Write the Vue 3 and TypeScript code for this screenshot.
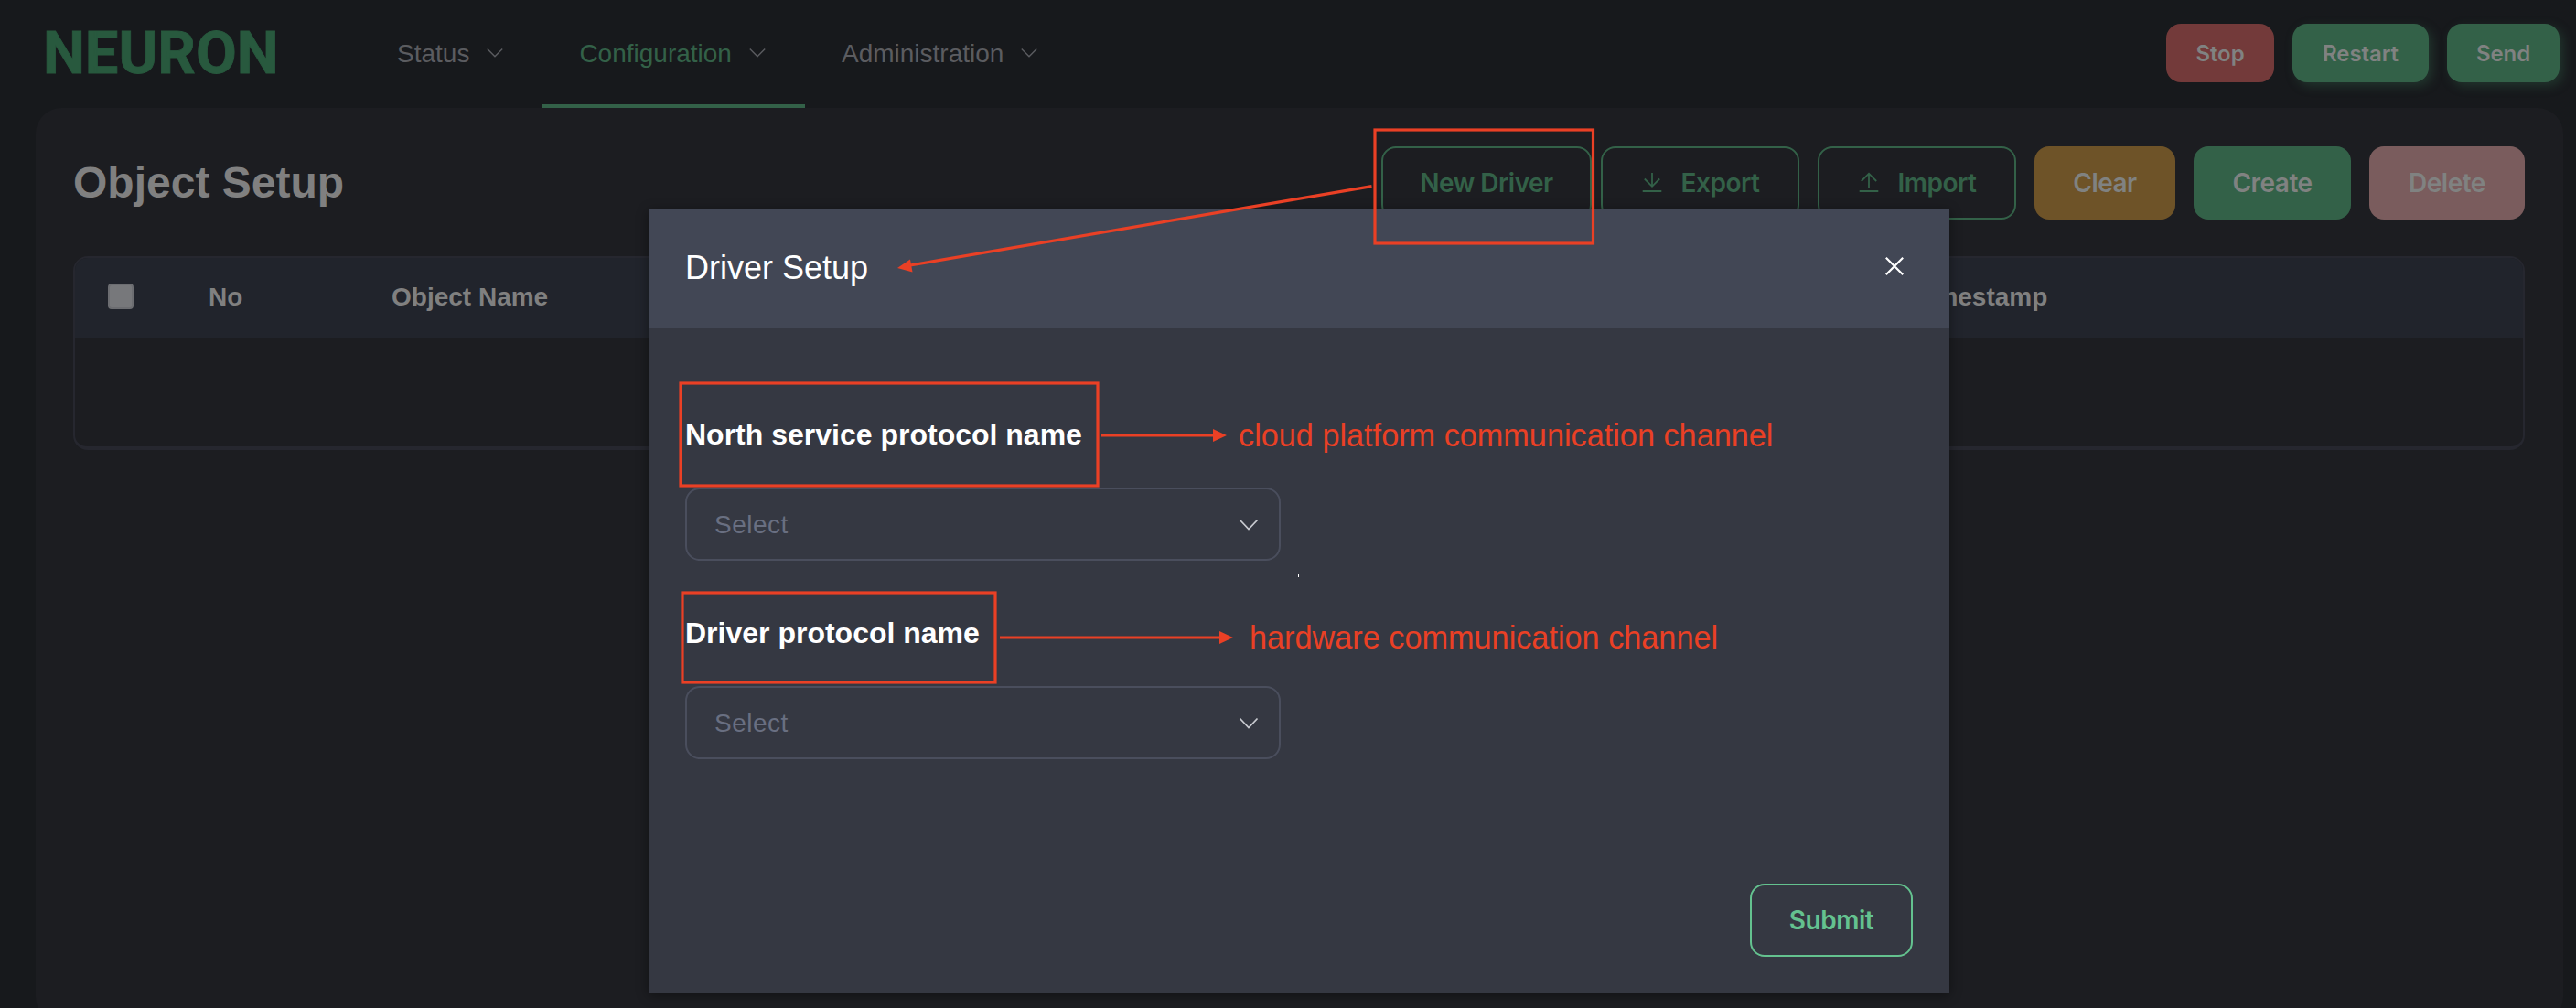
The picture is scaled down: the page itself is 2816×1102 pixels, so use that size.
<script setup lang="ts">
interface NavItem {
  label: string
  active?: boolean
}

const navItems: NavItem[] = [
  { label: 'Status' },
  { label: 'Configuration', active: true },
  { label: 'Administration' },
]

const fields: string[] = ['North service protocol name', 'Driver protocol name']
</script>

<template>
  <div class="page">
    <header class="topbar">
      <div class="logo">NEURON</div>
      <nav class="nav">
        <a v-for="item in navItems" :key="item.label" class="nav-item" :class="{ active: item.active }">
          <span>{{ item.label }}</span>
          <svg class="nav-chevron" viewBox="0 0 24 24"><path d="M3.800 7.500 12 15.800l8.200-8.300" /></svg>
        </a>
      </nav>
      <div class="top-actions">
        <button class="small stop">Stop</button>
        <button class="small restart glow">Restart</button>
        <button class="small send glow">Send</button>
      </div>
    </header>

    <main class="card">
      <div class="card-head">
        <h1>Object Setup</h1>
        <div class="actions">
          <button class="btn outline new-driver">New Driver</button>
          <button class="btn outline port">
            <svg class="btn-icon" viewBox="0 0 24 24"><path d="M12 1v15M3.800 7.500 12 15.800l8.200-8.300M1.700 21h20.600" /></svg>
            Export
          </button>
          <button class="btn outline port">
            <svg class="btn-icon" viewBox="0 0 24 24"><path d="M12 17V2M3.800 10 12 1.700l8.200 8.300M1.700 21h20.600" /></svg>
            Import
          </button>
          <button class="btn clear">Clear</button>
          <button class="btn create">Create</button>
          <button class="btn delete">Delete</button>
        </div>
      </div>
      <div class="table">
        <div class="thead">
          <span class="col-check"><i class="checkbox"></i></span>
          <span class="col-no">No</span>
          <span class="col-name">Object Name</span>
          <span class="col-time">Timestamp</span>
        </div>
      </div>
    </main>

    <section class="modal">
      <div class="modal-head">
        <h2>Driver Setup</h2>
        <svg class="close" viewBox="0 0 20 20"><path d="M.8.8 19.200 19.200M19.200.8.8 19.200" /></svg>
      </div>
      <div class="modal-body">
        <div v-for="field in fields" :key="field" class="field">
          <label>{{ field }}</label>
          <div class="select">
            <span>Select</span>
            <svg class="select-chevron" viewBox="0 0 22 14"><path d="M1.500 1.500 11 11.500l9.500-10" /></svg>
          </div>
        </div>
      </div>
      <div class="modal-foot">
        <button class="btn outline submit">Submit</button>
      </div>
    </section>

    <svg class="notes" viewBox="0 0 2816 1102">
      <g class="lines">
        <rect x="1503" y="142" width="238.500" height="124" />
        <rect x="744" y="419" width="456" height="112" />
        <rect x="746" y="648" width="342" height="98" />
        <path d="M1499.500 203.700 995 290" />
        <path d="M1204 476h124" />
        <path d="M1093 697h242" />
      </g>
      <g class="heads">
        <path d="M981 293 995 283.500 997.500 297.500Z" />
        <path d="M1341 476 1326 469v14Z" />
        <path d="M1348 697 1333 690v14Z" />
      </g>
      <text x="1354" y="488">cloud platform communication channel</text>
      <text x="1366" y="709">hardware communication channel</text>
      <rect class="tick" x="1419" y="628" width="1" height="3" />
    </svg>
  </div>
</template>

<style>
body {
  margin: 0;
  background: #17191c;
}
</style>

<style scoped>
.page {
  position: relative;
  width: 2816px;
  height: 1102px;
  overflow: hidden;
  background: #17191c;
  font-family: 'Liberation Sans', Arial, sans-serif;
  font-size: 28px;
  box-sizing: border-box;
}
.page * {
  box-sizing: border-box;
}
svg {
  fill: none;
  stroke: currentColor;
  flex: none;
}
.topbar {
  display: flex;
  height: 118px;
  padding: 0 18px 0 47px;
}
.logo {
  width: 347px;
  padding-top: 1px;
  font: 700 65px/114px Roboto, sans-serif;
  color: #28593e;
  -webkit-text-stroke: 0.8px #28593e;
}
.nav {
  display: flex;
}
.nav-item {
  display: flex;
  padding: 0 40px;
  line-height: 117px;
  color: #5b5c60;
  border-bottom: 4px solid transparent;
}
.nav-item.active {
  color: #336148;
  border-color: #336148;
}
.nav-chevron {
  width: 24px;
  height: 24px;
  margin: 46px 0 0 16px;
  color: #5b5c60;
  stroke-width: 1.4;
}
button {
  display: flex;
  align-items: center;
  justify-content: center;
  margin: 0;
  padding: 0;
  border: 0;
  border-radius: 16px;
  font-family: Inter, sans-serif;
  font-weight: 600;
  letter-spacing: -0.5px;
  white-space: nowrap;
}
.top-actions {
  display: flex;
  gap: 20px;
  margin-left: auto;
  padding-top: 26px;
}
.small {
  height: 64px;
  font-size: 24px;
  letter-spacing: -0.1px;
  color: #808281;
  background: #336148;
}
.stop {
  width: 118px;
  background: #733a3a;
}
.restart {
  width: 149px;
}
.send {
  width: 123px;
}
.glow {
  box-shadow: 4px 4px 12px rgba(51, 97, 72, 0.4);
}
.card {
  height: 1000px;
  margin: 0 14px 0 39px;
  padding: 42px 42px 0 41px;
  border-radius: 28px;
  background: #1c1d21;
}
.card-head {
  display: flex;
  justify-content: space-between;
  height: 120px;
}
h1 {
  margin: 0;
  font-size: 48px;
  line-height: 79px;
  color: #808080;
}
.actions {
  display: flex;
  gap: 20px;
}
.btn {
  height: 80px;
  font-size: 28px;
  color: #808281;
}
.outline {
  border: 2px solid #336148;
  color: #336148;
  background: transparent;
}
.new-driver {
  width: 230px;
  margin-right: -10px;
}
.port {
  width: 217px;
}
.btn-icon {
  width: 24px;
  height: 24px;
  margin-right: 20px;
  stroke-width: 1.8;
}
.clear {
  width: 154px;
  background: #6e5328;
}
.create {
  width: 172px;
  background: #336148;
}
.delete {
  width: 170px;
  background: #7a5c5d;
}
.table {
  height: 212px;
  border: 2px solid #26272f;
  border-bottom-width: 4px;
  border-radius: 16px;
  overflow: hidden;
}
.thead {
  display: flex;
  height: 88px;
  padding-left: 36px;
  background: #21242c;
  line-height: 86px;
  font-weight: 700;
  color: #808080;
}
.col-check {
  width: 110px;
  padding-top: 28px;
}
.checkbox {
  display: block;
  width: 28px;
  height: 28px;
  border: 2px solid #6c6d71;
  border-radius: 4px;
  background: #77787b;
}
.col-no {
  width: 200px;
}
.col-name {
  width: 1663px;
}
.modal {
  position: absolute;
  left: 709px;
  top: 229px;
  width: 1422px;
  height: 857px;
  display: flex;
  flex-direction: column;
  background: #353842;
  box-shadow: 0 2px 12px rgba(0, 0, 0, 0.4);
}
.modal-head {
  display: flex;
  justify-content: space-between;
  height: 130px;
  padding: 0 50px 0 40px;
  background: #424755;
  color: #fff;
}
h2 {
  margin: 0;
  font-size: 36px;
  font-weight: 400;
  line-height: 128px;
}
.close {
  width: 20px;
  height: 20px;
  margin-top: 52px;
  stroke-width: 2.2;
}
.modal-body {
  flex: 1;
  padding: 87px 40px 0;
}
.field {
  height: 217px;
}
label {
  display: block;
  height: 87px;
  font-size: 32px;
  font-weight: 700;
  line-height: 58px;
  color: #fff;
}
.select {
  display: flex;
  justify-content: space-between;
  width: 651px;
  height: 80px;
  padding: 0 22px 0 30px;
  border: 2px solid #4a4e5d;
  border-radius: 16px;
  line-height: 77px;
  letter-spacing: 0.5px;
  color: #696f81;
}
.select-chevron {
  width: 22px;
  height: 14px;
  margin-top: 32px;
  color: #c8cad0;
  stroke-width: 1.8;
}
.modal-foot {
  display: flex;
  justify-content: flex-end;
  padding: 0 40px 40px;
}
.submit {
  width: 178px;
  border-color: #64c28f;
  color: #64c28f;
}
.notes {
  position: absolute;
  left: 0;
  top: 0;
  width: 2816px;
  height: 1102px;
  stroke: none;
}
.lines {
  stroke: #ea4025;
  stroke-width: 3.2;
}
.heads,
.notes text {
  fill: #ea4025;
}
.notes text {
  font-size: 34.25px;
}
.tick {
  fill: #fff;
}
</style>
